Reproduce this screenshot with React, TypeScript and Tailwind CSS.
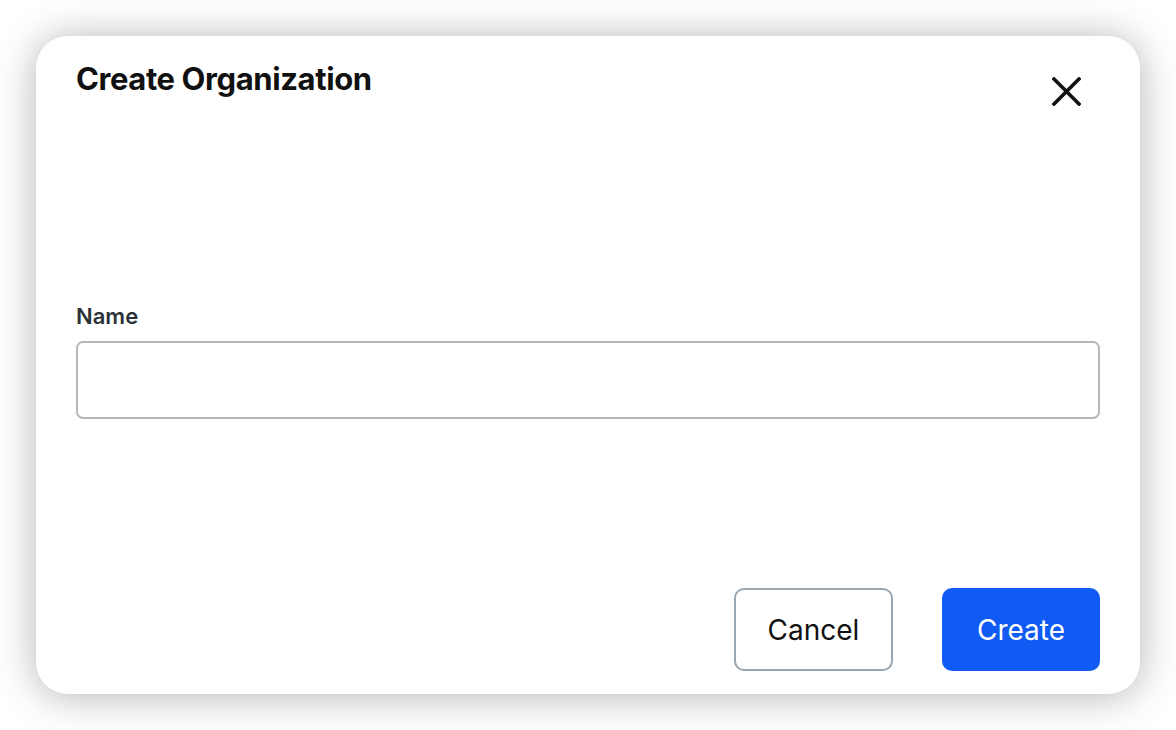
import * as React from "react";

export default function App() {
  const [name, setName] = React.useState("");

  return (
    <div className="min-h-screen bg-white p-[36px] font-['Inter',sans-serif]">
      <div className="flex h-[658px] w-[1104px] flex-col rounded-[32px] bg-white px-[40px] pb-[23px] pt-[24px] shadow-[0_2px_40px_rgba(0,0,0,0.3)]">
        {/* Header */}
        <div className="flex items-start justify-between">
          <h1 className="text-[31px] font-bold leading-[38px] tracking-[-0.4px] text-[#111111]">
            Create Organization
          </h1>
          <button
            type="button"
            aria-label="Close"
            className="mr-[19px] mt-[17px] flex h-[29px] w-[29px] items-center justify-center text-[#111111]"
          >
            <svg viewBox="0 0 29 29" className="h-[29px] w-[29px]" fill="none">
              <path
                d="M2 2L27 27M27 2L2 27"
                stroke="currentColor"
                strokeWidth={3.6}
                strokeLinecap="square"
              />
            </svg>
          </button>
        </div>

        {/* Name field */}
        <label className="mt-[196px] block">
          <span className="mb-[11px] block text-[22px] font-semibold leading-[28px] text-[#2c3338]">
            Name
          </span>
          <input
            type="text"
            value={name}
            onChange={(e) => setName(e.target.value)}
            className="block h-[78px] w-full rounded-[7px] border-2 border-[#b7b7b7] bg-white px-4 text-[22px] text-[#111111] outline-none"
          />
        </label>

        {/* Actions */}
        <div className="mt-auto flex justify-end gap-[49px]">
          <button
            type="button"
            className="h-[83px] w-[159px] rounded-[10px] border-2 border-[#9aa6b0] bg-white text-[28px] text-[#111111]"
          >
            Cancel
          </button>
          <button
            type="button"
            className="h-[83px] w-[158px] rounded-[10px] bg-[#0f5bf3] text-[28px] text-white"
          >
            Create
          </button>
        </div>
      </div>
    </div>
  );
}
